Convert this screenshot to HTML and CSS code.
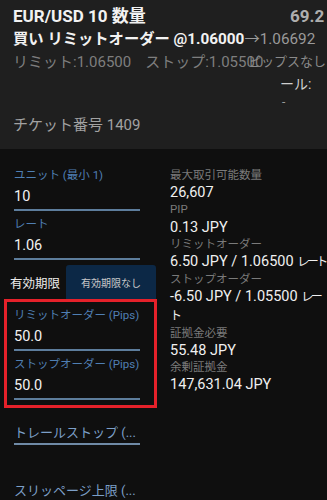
FILE: index.html
```html
<!DOCTYPE html>
<html lang="ja">
<head>
<meta charset="utf-8">
<link rel="stylesheet" href="styles.css">
</head>
<body>
<div class="header">
  <div class="title">EUR/USD 10 数量</div>
  <div class="line2">買い リミットオーダー @1.06000<span class="cur">→1.06692</span></div>
  <div class="line3">リミット:1.06500<span class="gap">ストップ:1.05500</span></div>
  <div class="ticket">チケット番号 1409</div>
  <div class="side">
    <div class="pl">69.2</div>
    <div class="side-a">ピップスなし</div>
    <div class="side-b">ール:</div>
    <div class="side-c">-</div>
  </div>
</div>
<div class="main">
  <div class="form">
    <div class="field">
      <div class="label">ユニット (最小 1)</div>
      <div class="value">10</div>
    </div>
    <div class="field">
      <div class="label">レート</div>
      <div class="value">1.06</div>
    </div>
    <div class="expiry">
      <div class="expiry-label">有効期限</div>
      <div class="expiry-btn">有効期限なし</div>
    </div>
    <div class="box">
      <div class="field">
        <div class="label">リミットオーダー (Pips)</div>
        <div class="value">50.0</div>
      </div>
      <div class="field last">
        <div class="label">ストップオーダー (Pips)</div>
        <div class="value">50.0</div>
      </div>
    </div>
    <div class="link first">トレールストップ (...</div>
    <div class="link">スリッページ上限 (...</div>
  </div>
  <div class="info">
    <div class="k">最大取引可能数量</div>
    <div class="v">26,607</div>
    <div class="k">PIP</div>
    <div class="v">0.13 JPY</div>
    <div class="k">リミットオーダー</div>
    <div class="v nowrap">6.50 JPY / 1.06500 <span class="kana">レート</span></div>
    <div class="k">ストップオーダー</div>
    <div class="v">-6.50 JPY / 1.05500 <span class="kana">レート</span></div>
    <div class="k">証拠金必要</div>
    <div class="v">55.48 JPY</div>
    <div class="k">余剰証拠金</div>
    <div class="v">147,631.04 JPY</div>
  </div>
</div>
</body>
</html>
```
FILE: styles.css
```css
html, body {
  margin: 0;
  padding: 0;
  background: #0f0f0f;
  font-family: Roboto, "Noto Sans CJK JP", sans-serif;
  overflow: hidden;
}
body {
  width: 327px;
  height: 500px;
}
.header {
  position: relative;
  background: #1f1f1f;
  height: 149px;
  box-sizing: border-box;
  padding: 4px 13px 0;
  overflow: hidden;
}
.title {
  font-size: 17px;
  font-weight: 700;
  line-height: 24px;
  color: #f2f2f2;
}
.line2 {
  font-size: 15.3px;
  font-weight: 700;
  line-height: 23px;
  color: #f2f2f2;
  white-space: nowrap;
}
.line2 .cur {
  font-weight: 400;
  color: #9a9a9a;
}
.line3 {
  font-size: 15px;
  line-height: 22px;
  color: #7e7e7e;
  white-space: nowrap;
}
.line3 .gap {
  margin-left: 14px;
}
.ticket {
  margin-top: 41px;
  font-size: 15px;
  line-height: 22px;
  color: #a2a2a2;
}
.side {
  position: absolute;
  left: 248px;
  top: 4px;
  width: 90px;
  white-space: nowrap;
}
.pl {
  padding-left: 42px;
  font-size: 17px;
  font-weight: 700;
  line-height: 24px;
  color: #aeaeae;
}
.side-a {
  margin-top: 23px;
  font-size: 13px;
  line-height: 22px;
  color: #8a8a8a;
}
.side-b {
  padding-left: 32px;
  font-size: 14px;
  line-height: 20px;
  color: #cfcfcf;
  margin-top: 1px;
}
.side-c {
  padding-left: 34px;
  font-size: 12px;
  line-height: 16px;
  color: #9a9a9a;
}
.main {
  display: flex;
  padding-top: 18px;
}
.form {
  width: 157px;
  flex: none;
}
.field {
  margin-left: 14px;
  width: 126px;
  margin-bottom: 5px;
}
.field.last {
  margin-bottom: 0;
}
.label {
  font-size: 11.5px;
  line-height: 16px;
  color: #4f7fb3;
  white-space: nowrap;
}
.value {
  padding-top: 2px;
  font-size: 14.5px;
  line-height: 24px;
  color: #f2f2f2;
  border-bottom: 2px solid #5d7d9c;
}
.expiry {
  display: flex;
  align-items: center;
  margin-top: 2px;
}
.expiry-label {
  width: 66px;
  padding-left: 10px;
  box-sizing: border-box;
  font-size: 12.5px;
  color: #ececec;
  white-space: nowrap;
  margin-top: 1px;
}
.expiry-btn {
  width: 90px;
  height: 34px;
  box-sizing: border-box;
  background: #0c2846;
  border-radius: 3px 3px 0 0;
  display: flex;
  align-items: center;
  justify-content: center;
  font-size: 10px;
  color: #c9c9c9;
}
.box {
  margin-left: 4px;
  width: 153px;
  box-sizing: border-box;
  border: 3px solid #e5212a;
  padding: 5px 0 5px;
}
.box .field {
  margin-left: 7px;
}
.link {
  margin-left: 14px;
  width: 126px;
  margin-top: 35px;
  font-size: 13px;
  line-height: 21px;
  color: #7c9fc8;
  border-bottom: 2px solid #6f8aa6;
  white-space: nowrap;
  overflow: hidden;
}
.link.first {
  margin-top: 14px;
}
.info {
  margin-left: 13px;
  width: 157px;
  flex: none;
}
.k {
  font-size: 11.5px;
  line-height: 17.2px;
  color: #7a7a7a;
}
.v {
  font-size: 14.5px;
  line-height: 17.2px;
  color: #f0f0f0;
}
.v.nowrap {
  white-space: nowrap;
}
.kana {
  font-size: 12px;
  letter-spacing: -2.5px;
}
```
